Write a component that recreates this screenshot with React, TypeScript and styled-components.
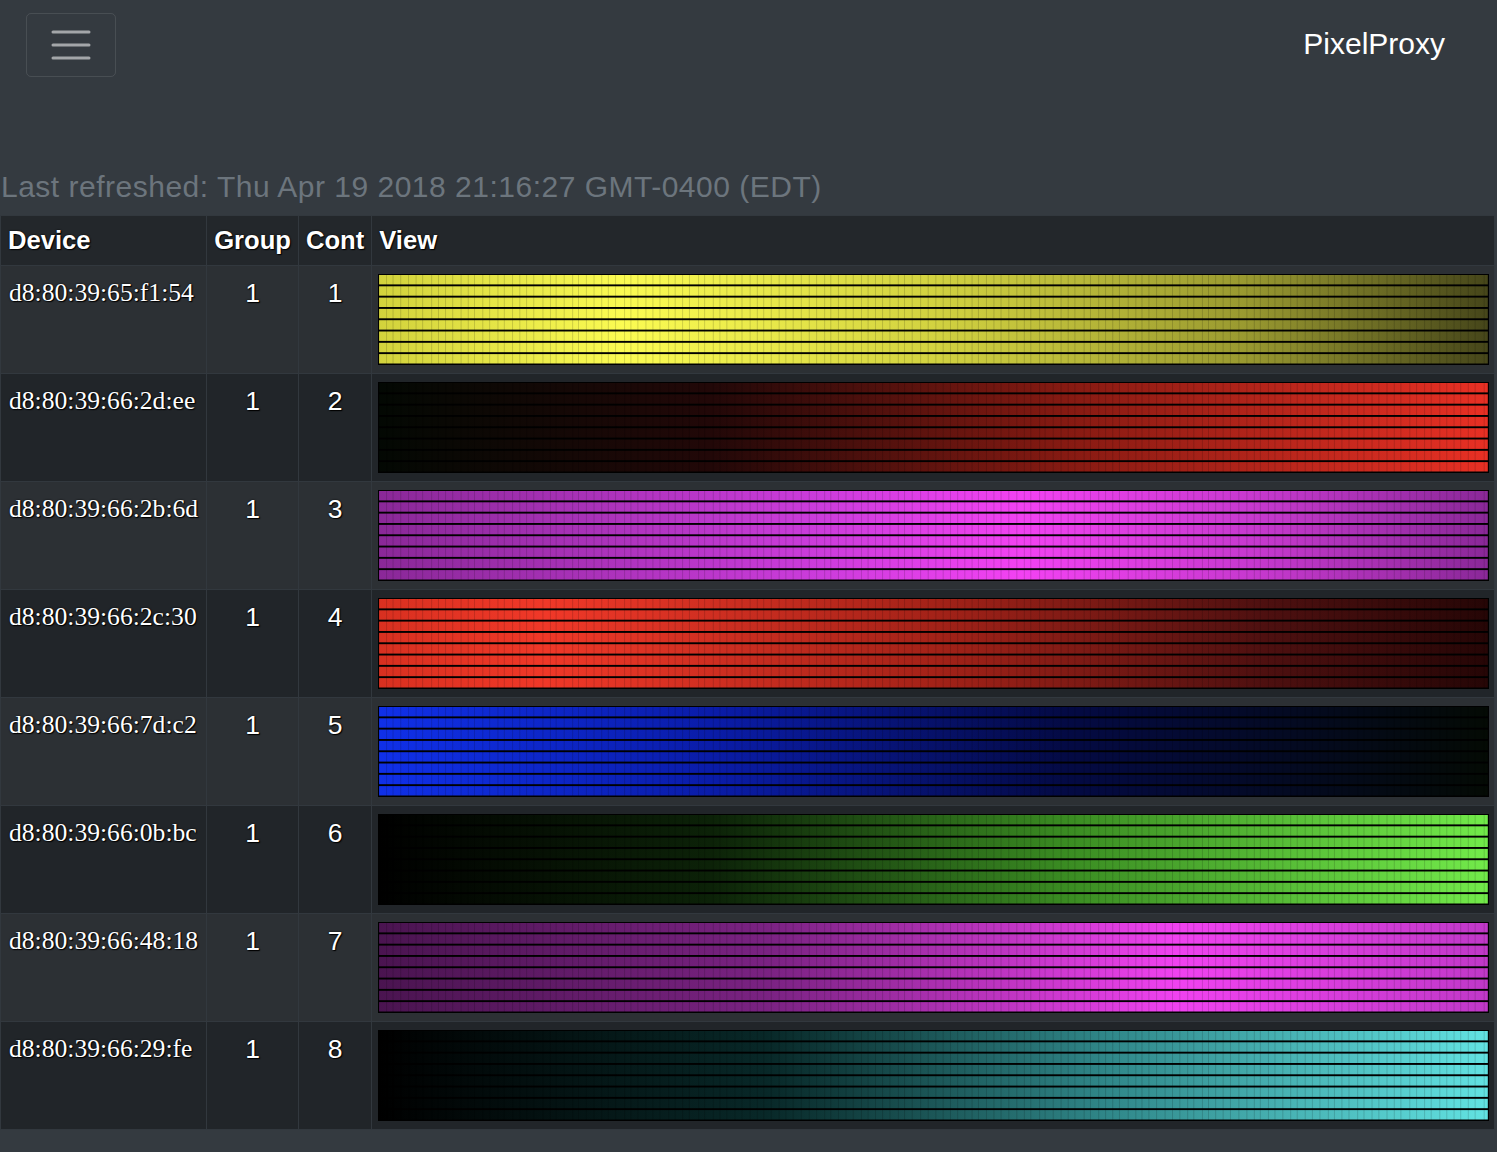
import styled, { createGlobalStyle } from "styled-components";

const GlobalStyle = createGlobalStyle`
  html, body {
    margin: 0;
    padding: 0;
    background: #343a40;
    font-family: "Liberation Sans", Arial, sans-serif;
    color: #fff;
  }
  body {
    min-height: 1152px;
  }
`;

const Page = styled.div`
  background: #343a40;
  min-height: 1152px;
`;

const NavBar = styled.nav`
  display: flex;
  align-items: center;
  justify-content: space-between;
  padding: 13px 52px 0 26px;
`;

const Toggler = styled.button`
  display: flex;
  align-items: center;
  justify-content: center;
  width: 90px;
  height: 64px;
  padding: 0;
  background: transparent;
  border: 1px solid rgba(255, 255, 255, 0.1);
  border-radius: 5px;
`;

const Brand = styled.div`
  font-size: 30px;
  color: #fff;
  margin-top: -2px;
`;

const Refreshed = styled.div`
  margin-top: 91px;
  font-size: 30px;
  letter-spacing: 0.5px;
  line-height: 38px;
  color: #6c757d;
  padding-left: 1px;
`;

const Table = styled.table`
  width: 1495px;
  margin-top: 9px;
  border-collapse: collapse;
  background: #212529;
  color: #fff;
  text-shadow: 0 0 2px #000, 1px 1px 1px #000;
`;

const HeadCell = styled.th`
  text-align: left;
  font-weight: bold;
  font-size: 25.6px;
  line-height: 33px;
  padding: 8px 7px;
  border: 1px solid #32383e;
  background: #23272b;
  white-space: nowrap;
`;

const Row = styled.tr<{ $odd: boolean }>`
  background: ${(p) => (p.$odd ? "#2c3034" : "#212529")};
`;

const Cell = styled.td<{ $serif?: boolean; $center?: boolean }>`
  vertical-align: top;
  padding: 9px 8px 8px;
  border: 1px solid #32383e;
  font-size: ${(p) => (p.$serif ? "25.6px" : "26.5px")};
  line-height: 36px;
  white-space: nowrap;
  font-family: ${(p) =>
    p.$serif ? '"Liberation Serif", "Times New Roman", serif' : '"Liberation Sans", Arial, sans-serif'};
  text-align: ${(p) => (p.$center ? "center" : "left")};
`;

const ViewCell = styled.td`
  vertical-align: top;
  padding: 8px 5px 8px 6px;
  border: 1px solid #32383e;
  width: 100%;
`;

const Strip = styled.svg`
  display: block;
  width: 100%;
  height: 91px;
  background: #000;
`;

type Stop = [number, string];

const devices: { mac: string; cont: number; stops: Stop[] }[] = [
  {
    mac: "d8:80:39:65:f1:54",
    cont: 1,
    stops: [
      [0, "#d2d23c"],
      [0.22, "#fbfb52"],
      [0.5, "#d2d240"],
      [0.78, "#9a9a30"],
      [1, "#46461a"],
    ],
  },
  {
    mac: "d8:80:39:66:2d:ee",
    cont: 2,
    stops: [
      [0, "#030803"],
      [0.3, "#220808"],
      [0.62, "#861a12"],
      [1, "#e83024"],
    ],
  },
  {
    mac: "d8:80:39:66:2b:6d",
    cont: 3,
    stops: [
      [0, "#8a2898"],
      [0.4, "#cc3cdc"],
      [0.58, "#f242f2"],
      [0.8, "#c438cc"],
      [1, "#8a2898"],
    ],
  },
  {
    mac: "d8:80:39:66:2c:30",
    cont: 4,
    stops: [
      [0, "#d83020"],
      [0.15, "#f03828"],
      [0.5, "#a42218"],
      [0.8, "#4e1010"],
      [1, "#260606"],
    ],
  },
  {
    mac: "d8:80:39:66:7d:c2",
    cont: 5,
    stops: [
      [0, "#1030e8"],
      [0.3, "#0a1ca8"],
      [0.62, "#040a44"],
      [1, "#040a04"],
    ],
  },
  {
    mac: "d8:80:39:66:0b:bc",
    cont: 6,
    stops: [
      [0, "#000000"],
      [0.3, "#0c2208"],
      [0.62, "#3a8c22"],
      [1, "#72ea4a"],
    ],
  },
  {
    mac: "d8:80:39:66:48:18",
    cont: 7,
    stops: [
      [0, "#4a1450"],
      [0.35, "#7a2282"],
      [0.72, "#f042f0"],
      [1, "#c038c8"],
    ],
  },
  {
    mac: "d8:80:39:66:29:fe",
    cont: 8,
    stops: [
      [0, "#000000"],
      [0.35, "#082828"],
      [0.66, "#30888a"],
      [1, "#62e2e2"],
    ],
  },
];

// pseudo-random pixel column seams, same for every bar
const seams: number[] = [];
let seed = 7;
for (let x = 0; x < 1109; x += 7.4) {
  seed = (seed * 9301 + 49297) % 233280;
  seams.push(x + (seed / 233280) * 2);
}

const Bar = ({ id, stops }: { id: string; stops: Stop[] }) => (
  <Strip viewBox="0 0 1109 91" preserveAspectRatio="none">
    <defs>
      <linearGradient id={id} x1="0" x2="1" y1="0" y2="0">
        {stops.map(([o, c]) => (
          <stop key={o} offset={o} stopColor={c} />
        ))}
      </linearGradient>
    </defs>
    {Array.from({ length: 8 }).map((_, i) => (
      <rect key={i} x={1} y={1 + i * 11.3} width={1107} height={9.4} fill={`url(#${id})`} />
    ))}
    <g stroke="#000" strokeOpacity={0.15} strokeWidth={1}>
      {seams.map((x, i) => (
        <line key={i} x1={x} x2={x} y1={0} y2={91} />
      ))}
    </g>
  </Strip>
);

const MenuIcon = () => (
  <svg width="40" height="30" viewBox="0 0 40 30">
    <g stroke="rgba(255,255,255,0.55)" strokeWidth="3" strokeLinecap="round">
      <line x1="2" y1="2" x2="38" y2="2" />
      <line x1="2" y1="15" x2="38" y2="15" />
      <line x1="2" y1="28" x2="38" y2="28" />
    </g>
  </svg>
);

const App = () => {
  return (
    <Page>
      <GlobalStyle />
      <NavBar>
        <Toggler aria-label="menu">
          <MenuIcon />
        </Toggler>
        <Brand>PixelProxy</Brand>
      </NavBar>
      <Refreshed>Last refreshed: Thu Apr 19 2018 21:16:27 GMT-0400 (EDT)</Refreshed>
      <Table>
        <thead>
          <tr>
            <HeadCell>Device</HeadCell>
            <HeadCell>Group</HeadCell>
            <HeadCell>Cont</HeadCell>
            <HeadCell>View</HeadCell>
          </tr>
        </thead>
        <tbody>
          {devices.map((d, i) => (
            <Row key={d.mac} $odd={i % 2 === 0}>
              <Cell $serif>{d.mac}</Cell>
              <Cell $center>1</Cell>
              <Cell $center>{d.cont}</Cell>
              <ViewCell>
                <Bar id={`g${i}`} stops={d.stops} />
              </ViewCell>
            </Row>
          ))}
        </tbody>
      </Table>
    </Page>
  );
};

export default App;
